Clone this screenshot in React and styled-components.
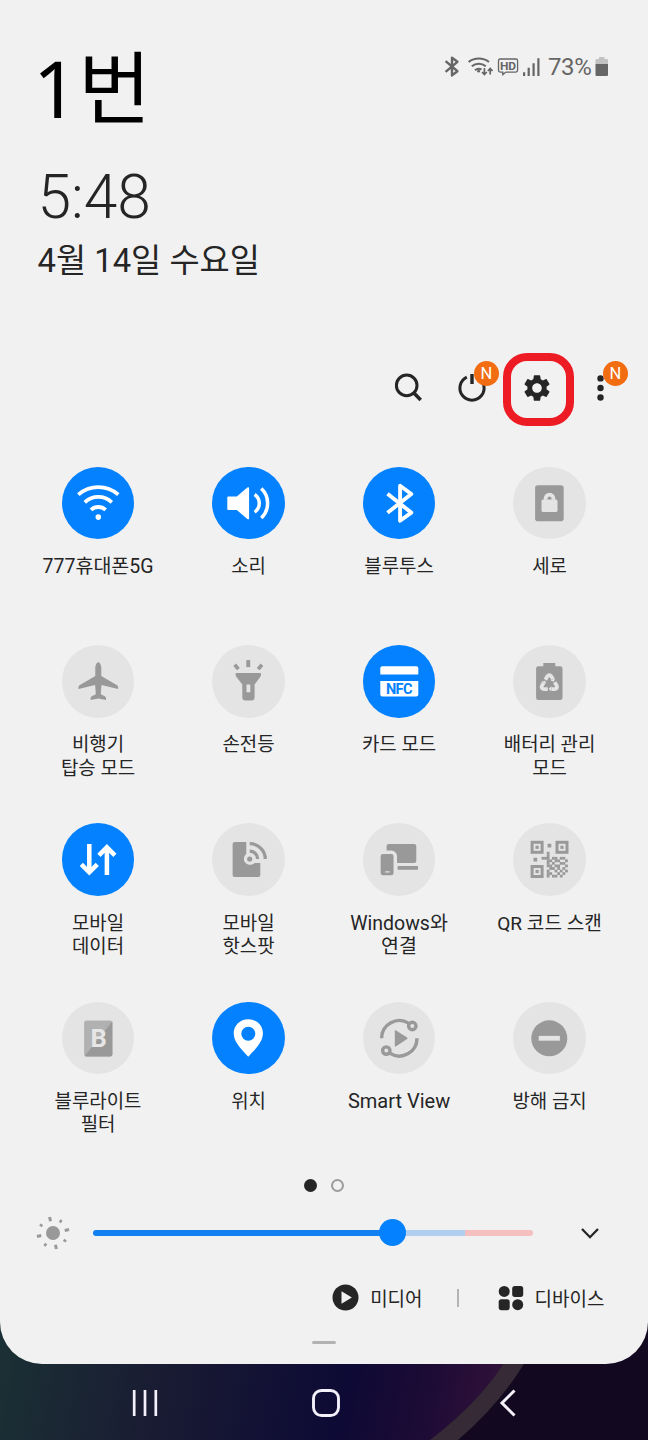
import React from "react";
import styled, { createGlobalStyle, css } from "styled-components";
import { MdSettings } from "react-icons/md";

const GlobalStyle = createGlobalStyle`
  * {
    box-sizing: border-box;
  }
  body {
    margin: 0;
    background: #120a20;
    font-family: Roboto, "Noto Sans CJK KR", sans-serif;
    color: #252525;
  }
`;

const Screen = styled.div`
  position: relative;
  display: flex;
  flex-direction: column;
  width: 648px;
  height: 1440px;
  overflow: hidden;
`;

const WallpaperSvg = styled.svg`
  position: absolute;
  left: 0;
  bottom: 0;
`;

const Panel = styled.main`
  position: relative;
  display: flex;
  flex-direction: column;
  height: 1364px;
  background: #f1f1f1;
  border-radius: 0 0 42px 42px;
`;

const Header = styled.header`
  display: flex;
  justify-content: space-between;
  height: 348px;
  padding: 28px 40px 0 33px;
`;

const Carrier = styled.h1`
  margin: 0;
  font-family: "Noto Sans", "Noto Sans CJK KR", sans-serif;
  font-size: 79px;
  font-weight: 400;
  line-height: 120px;
  color: #000;
`;

const Clock = styled.div`
  margin: 13px 0 0 4.5px;
  font-size: 60.5px;
  font-weight: 300;
  line-height: 74px;
`;

const DateText = styled.div`
  margin: 5px 0 0 4.5px;
  font-size: 32.8px;
  line-height: 42px;
`;

const StatusBar = styled.div`
  display: flex;
  align-items: center;
  height: 30px;
  margin-top: 24px;
  color: #666;
`;

const BatteryPercent = styled.span`
  width: 47px;
  font-size: 24px;
  letter-spacing: -0.4px;
`;

const Toolbar = styled.div`
  display: flex;
  justify-content: flex-end;
  height: 80px;
  padding-right: 14.5px;
`;

const ToolButton = styled.button`
  position: relative;
  display: flex;
  align-items: center;
  justify-content: center;
  width: 64.6px;
  height: 80px;
  padding: 0;
  border: 0;
  background: none;
  color: #252525;
`;

const Highlight = styled.span`
  position: absolute;
  top: 5px;
  left: -1.3px;
  width: 71px;
  height: 73px;
  border: 8px solid #ed1c24;
  border-radius: 24px;
`;

const Badge = styled.span`
  position: absolute;
  top: 13px;
  right: 5.5px;
  display: flex;
  align-items: center;
  justify-content: center;
  width: 25px;
  height: 25px;
  border-radius: 50%;
  background: #f26c12;
  color: #fff;
  font-family: Roboto, sans-serif;
  font-size: 16.5px;
  line-height: 25px;
`;

const TileGrid = styled.section`
  display: grid;
  grid-template-columns: repeat(4, 150.5px);
  grid-auto-rows: 178.3px;
  margin: 38.8px 0 0 22.8px;
`;

const Tile = styled.div`
  display: flex;
  flex-direction: column;
  align-items: center;
`;

const TileIcon = styled.div`
  width: 72.6px;
  height: 72.6px;
  border-radius: 50%;
  background: ${({ $on }) => ($on ? "#0381fe" : "#e4e4e4")};
  color: ${({ $on }) => ($on ? "#fff" : "#999")};

  svg {
    display: block;
  }
`;

const TileLabel = styled.div`
  margin-top: 15.6px;
  font-size: ${({ $size }) => $size || 18.9}px;
  line-height: 23.4px;
  text-align: center;
  white-space: pre-line;
`;

const Pager = styled.div`
  display: flex;
  align-items: center;
  justify-content: center;
  gap: 13.5px;
  height: 14px;
  margin-top: -1px;
`;

const PageDot = styled.span`
  width: 13px;
  height: 13px;
  border-radius: 50%;
  ${({ $active }) =>
    $active
      ? css`
          background: #252525;
        `
      : css`
          border: 2.4px solid #9b9b9b;
        `}
`;

const BrightnessRow = styled.div`
  display: flex;
  align-items: center;
  height: 40px;
  margin-top: 20.5px;
  padding: 0 48px 0 35px;
`;

const Track = styled.div`
  display: flex;
  align-items: center;
  width: 440px;
  height: 6px;
  margin: -1px 0 0 22px;
  border-radius: 3px;
  background: linear-gradient(
    to right,
    #1280f0 0 300px,
    #b0cff0 300px 372px,
    #f6bfbf 372px
  );
`;

const Thumb = styled.span`
  width: 27px;
  height: 27px;
  margin-left: 286px;
  border-radius: 50%;
  background: #0381fe;
`;

const Chevron = styled.svg`
  margin-left: auto;
`;

const Footer = styled.div`
  display: flex;
  align-items: center;
  justify-content: flex-end;
  height: 40px;
  margin-top: 24.5px;
  padding-right: 43.5px;
  font-size: 19px;
`;

const FooterItem = styled.div`
  display: flex;
  align-items: center;
  gap: 11px;
`;

const Divider = styled.span`
  width: 2px;
  height: 18px;
  margin: 0 39px 0 34px;
  background: #b4b4b4;
`;

const Handle = styled.span`
  align-self: center;
  width: 24px;
  height: 3px;
  margin-top: 23px;
  border-radius: 2px;
  background: #b2b2b2;
`;

const NavBar = styled.nav`
  position: relative;
  display: grid;
  grid-template-columns: repeat(3, 181.5px);
  justify-content: center;
  align-items: center;
  justify-items: center;
  height: 76px;
  padding: 2px 0 0 4px;
`;

// Every icon is drawn around its own centre point.
function Icon({ size = 72.6, children, ...rest }) {
  return (
    <svg
      width={size}
      height={size}
      viewBox={`${-size / 2} ${-size / 2} ${size} ${size}`}
      fill="currentColor"
      {...rest}
    >
      {children}
    </svg>
  );
}

const line = { fill: "none", stroke: "currentColor" };

function WifiIcon() {
  return (
    <Icon>
      <g {...line} strokeWidth="3.8">
        <path d="M-20 -8.7A30.4 30.4 0 0 1 20 -8.7" />
        <path d="M-13.5 -1A19.6 19.6 0 0 1 13.5 -1" />
        <path d="M-7.3 6.6A10.6 10.6 0 0 1 7.3 6.6" />
      </g>
      <circle cy="13.8" r="2.8" />
    </Icon>
  );
}

function SoundIcon() {
  return (
    <Icon>
      <path d="M-20 -6.7H-11.5L-1 -15.8Q.8 -16.8 .8 -15V15Q.8 16.8 -1 15.8L-11.5 6.7H-20Q-21 6.7 -21 5.7V-5.7Q-21 -6.7 -20 -6.7Z" />
      <g {...line} strokeWidth="3.5">
        <path d="M6.3 -8.8A10.6 10.6 0 0 1 6.3 8.8" />
        <path d="M13 -14.7A20.3 20.3 0 0 1 13 14.7" />
      </g>
    </Icon>
  );
}

function BluetoothIcon() {
  return (
    <Icon>
      <path
        d="M-11.8 -9.5L12 9.3L.8 17.5V-17.5L12 -9.3L-11.8 9.5"
        {...line}
        strokeWidth="3.9"
        strokeLinejoin="round"
      />
    </Icon>
  );
}

function PortraitIcon() {
  return (
    <Icon>
      <rect x="-14.2" y="-18" width="28.6" height="36" rx="2.8" />
      <g fill="#e4e4e4">
        <rect x="-7.8" y="-3.8" width="16" height="12.6" rx="1.6" />
        <path d="M-5.6 -3.5V-4.8A5.8 5.8 0 0 1 6 -4.8V-3.5Z" />
      </g>
      <path d="M-1.7 -3.8V-5A1.9 1.9 0 0 1 2.1 -5V-3.8Z" />
    </Icon>
  );
}

function PlaneIcon() {
  return (
    <Icon>
      <path d="M0 -19C1.8 -19 3 -15.5 3 -13V-5.2L18.8 4Q19.8 4.7 19.8 6V7.8L3.2 3.6L2.5 12.2Q2.6 13.4 4 13.8Q7.7 15 7.7 17V18.8L0 17.2L-7.7 18.8V17Q-7.7 15 -4 13.8Q-2.6 13.4 -2.5 12.2L-3.2 3.6L-19.8 7.8V6Q-19.8 4.7 -18.8 4L-3 -5.2V-13C-3 -15.5 -1.8 -19 0 -19Z" />
    </Icon>
  );
}

function FlashlightIcon() {
  return (
    <Icon>
      <path d="M-2 -21.2H1.9V-14.2H-2Z" />
      <path d="M-13.6 -16.6L-9.9 -12.2M13.6 -16.6L9.9 -12.2" {...line} strokeWidth="3.7" />
      <path
        fillRule="evenodd"
        d="M-12.6 -8.2H12.6V-5.4L6.3 3.3V16.3Q6.3 19.3 3.3 19.3H-3Q-6 19.3 -6 16.3V3.3L-12.6 -5.4ZM-1.8 3.3V10.9H2V3.3Z"
      />
    </Icon>
  );
}

const NfcText = styled.text`
  fill: #0381fe;
  font: 700 14.6px Roboto, sans-serif;
`;

function NfcIcon() {
  return (
    <Icon>
      <path d="M-19 -6.7V-13Q-19 -15 -17 -15H17Q19 -15 19 -13V-6.7Z" />
      <path d="M-19 -.3H19V13Q19 15.2 17 15.2H-17Q-19 15.2 -19 13Z" />
      <NfcText x="-13.4" y="12.8" textLength="26.6">
        NFC
      </NfcText>
    </Icon>
  );
}

function BatteryIcon() {
  return (
    <Icon>
      <path d="M-6 -18.3H6V-15H11Q13.2 -15 13.2 -12.8V16.4Q13.2 18.6 11 18.6H-11Q-13.2 18.6 -13.2 16.4V-12.8Q-13.2 -15 -11 -15H-6Z" />
      <g color="#e4e4e4">
        {[0, 120, 240].map((angle) => (
          <g key={angle} transform={`translate(0 2.4) rotate(${angle})`}>
            <path d="M-3.9 -4L-2 -7.3Q0 -10 2 -7.3L3.6 -4.6" {...line} strokeWidth="3.8" />
            <path d="M1.2 -3.2L5.9 -5.6L4.6 -1.9Z" fill="currentColor" />
          </g>
        ))}
      </g>
    </Icon>
  );
}

function DataIcon() {
  return (
    <Icon>
      <g {...line} strokeWidth="4.5">
        <path d="M-9 -15.3V13M-17 5L-9 13L-1 5" />
        <path d="M8.6 15.8V-12M.6 -4L8.6 -12L16.6 -4" />
      </g>
    </Icon>
  );
}

function HotspotIcon() {
  return (
    <Icon>
      <path d="M-13.7 -17.3H-2V-5.5A6 6 0 1 0 6.5 3.6H12V15.6Q12 17.6 10 17.6H-13.7Q-15.7 17.6 -15.7 15.6V-15.3Q-15.7 -17.3 -13.7 -17.3Z" />
      <circle cx="1.4" cy="-.3" r="5.8" fill="#e4e4e4" />
      <circle cx="1.4" cy="-.3" r="2.6" />
      <g {...line} strokeWidth="3.3">
        <path d="M1.4 -8.2A7.9 7.9 0 0 1 9.3 -.3" />
        <path d="M1.4 -15.7A15.6 15.6 0 0 1 17 -.3" />
      </g>
    </Icon>
  );
}

function WindowsLinkIcon() {
  return (
    <Icon>
      <rect x="-12.7" y="-15.3" width="29.7" height="19" rx="2.2" />
      <path d="M-1.7 6.7H18.7V10.5H-1.7Z" />
      <rect
        x="-20.4"
        y="-7"
        width="16.4"
        height="24.8"
        rx="4"
        fill="currentColor"
        stroke="#e4e4e4"
        strokeWidth="3.5"
      />
      <path d="M-14.2 12H-9.6V13.2H-14.2Z" fill="#e4e4e4" />
    </Icon>
  );
}

// Lower right area of the code, one string per row of modules.
const qrModules = [
  "..#.......",
  "..#.......",
  "###.##.##.",
  "..##.##..#",
  "..#.#..##.",
  "..##.##..#",
  "...##.#.#.",
  "..#..#.#.#",
  "..##..#.#.",
  "..#.##.#..",
];

function QrIcon() {
  return (
    <Icon>
      {[
        [-18.7, -18.5],
        [6.2, -18.5],
        [-18.7, 5.7],
      ].map(([x, y]) => (
        <g key={`${x}${y}`}>
          <rect x={x + 1.5} y={y + 1.5} width="10" height="10" {...line} strokeWidth="3" />
          <rect x={x + 4.9} y={y + 4.9} width="3.2" height="3.2" />
        </g>
      ))}
      <path d="M-1.7 -15.5H2V-11.8H-1.7ZM-15.8 -1.5H-12.1V2.2H-15.8Z" />
      {qrModules.map((row, y) =>
        row
          .split("")
          .map((cell, x) =>
            cell === "#" ? (
              <rect key={`${x}-${y}`} x={-7.8 + x * 2.62} y={-7.5 + y * 2.55} width="2.8" height="2.75" />
            ) : null
          )
      )}
    </Icon>
  );
}

const FilterText = styled.text`
  fill: #e6e6e6;
  font: 700 25.5px Roboto, sans-serif;
`;

function BlueLightIcon() {
  return (
    <Icon>
      <rect x="-14.2" y="-17.8" width="28.3" height="36" rx="2.5" fill="#b1b1b1" />
      <path d="M13.9 -16.7L-13.5 17.7Q-12.8 18.2 -11.8 18.2H11.6Q14.1 18.2 14.1 15.7V-15.5Q14.1 -16.2 13.9 -16.7Z" />
      <FilterText x="-7.8" y="8.6">
        B
      </FilterText>
    </Icon>
  );
}

function LocationIcon() {
  return (
    <Icon>
      <path
        fillRule="evenodd"
        d="M0 -19C8.3 -19 14.6 -12.8 14.6 -4.9C14.6 4.6 4.5 13 0 18.4C-4.5 13 -14.6 4.6 -14.6 -4.9C-14.6 -12.8 -8.3 -19 0 -19ZM0 -11.6A7 7 0 1 0 0 2.4A7 7 0 1 0 0 -11.6Z"
      />
    </Icon>
  );
}

function SmartViewIcon() {
  return (
    <Icon>
      <path d="M-4.5 -7Q-4.5 -8.4 -3.2 -7.7L7.8 -.7Q8.8 0 7.8 .7L-3.2 7.9Q-4.5 8.6 -4.5 7.2Z" />
      <g {...line} strokeWidth="3.4">
        <path d="M-17.7 0A17.7 17.7 0 0 1 9.6 -14.9" />
        <path d="M17.7 0A17.7 17.7 0 0 1 -9.6 14.9" />
        <circle cx="13" cy="-12.3" r="3.7" />
        <circle cx="-13" cy="12.3" r="3.7" />
      </g>
    </Icon>
  );
}

function DndIcon() {
  return (
    <Icon>
      <circle r="18" />
      <path d="M-10.6 -2.4H10.6V2.4H-10.6Z" fill="#e4e4e4" />
    </Icon>
  );
}

const tiles = [
  { label: "777휴대폰5G", icon: WifiIcon, on: true, size: 19.5 },
  { label: "소리", icon: SoundIcon, on: true },
  { label: "블루투스", icon: BluetoothIcon, on: true },
  { label: "세로", icon: PortraitIcon },
  { label: "비행기\n탑승 모드", icon: PlaneIcon },
  { label: "손전등", icon: FlashlightIcon },
  { label: "카드 모드", icon: NfcIcon, on: true },
  { label: "배터리 관리\n모드", icon: BatteryIcon },
  { label: "모바일\n데이터", icon: DataIcon, on: true },
  { label: "모바일\n핫스팟", icon: HotspotIcon },
  { label: "Windows와\n연결", icon: WindowsLinkIcon, size: 19.5 },
  { label: "QR 코드 스캔", icon: QrIcon, size: 19.1 },
  { label: "블루라이트\n필터", icon: BlueLightIcon },
  { label: "위치", icon: LocationIcon, on: true },
  { label: "Smart View", icon: SmartViewIcon, size: 20 },
  { label: "방해 금지", icon: DndIcon },
];

const HdText = styled.text`
  font: 700 11.5px Roboto, sans-serif;
`;

function StatusIcons() {
  return (
    <svg width="105" height="30" viewBox="443 52 105 30" fill="currentColor">
      <path
        d="M445.6 61.2L457.4 71.2L452 75.4V57.6L457.4 61.8L445.6 71.8"
        {...line}
        strokeWidth="2.4"
        strokeLinejoin="round"
      />
      <g {...line} strokeWidth="2.1">
        <path d="M468.6 62A16.5 16.5 0 0 1 489 62" />
        <path d="M471.8 66.3A11 11 0 0 1 485.8 66.3" />
        <path d="M475 70.3A6 6 0 0 1 481.5 69.5" />
      </g>
      <circle cx="478.6" cy="71.2" r="1.4" />
      <path
        d="M484.4 68V74M482 72L484.4 74.5L486.8 72M490.2 74.5V69M487.8 71L490.2 68.5L492.6 71"
        {...line}
        strokeWidth="1.7"
      />
      <path
        d="M500.3 59H515.8Q517.6 59 517.6 60.8V70.3Q517.6 72.1 515.8 72.1H506L502.8 74.6V72.1H500.3Q498.5 72.1 498.5 70.3V60.8Q498.5 59 500.3 59Z"
        {...line}
        strokeWidth="1.3"
      />
      <HdText x="499.9" y="69.8" textLength="16.2" lengthAdjust="spacingAndGlyphs">
        HD
      </HdText>
      <path d="M523 72.2H525.2V76H523ZM527.6 67.8H529.8V76H527.6ZM532.5 63.2H534.7V76H532.5ZM537.3 58.2H539.5V76H537.3Z" />
    </svg>
  );
}

function BatteryLevel() {
  return (
    <svg width="13" height="20" viewBox="0 0 13 20">
      <path d="M4 0H9.5V2H12Q13 2 13 3V8H.5V3Q.5 2 1.5 2H4Z" fill="#c2c2c2" />
      <path d="M.5 7H13V18Q13 19 12 19H1.5Q.5 19 .5 18Z" fill="#666" />
    </svg>
  );
}

function SearchIcon() {
  return (
    <Icon size={40}>
      <circle cx="-.3" cy="-2.6" r="10.3" {...line} strokeWidth="3" />
      <path d="M6.7 4.7L13.7 12" {...line} strokeWidth="3.5" />
    </Icon>
  );
}

function PowerIcon() {
  return (
    <Icon size={40}>
      <path d="M-5.2 -10.9A12.1 12.1 0 1 0 5.2 -10.9" {...line} strokeWidth="3" />
      <path d="M0 -14V-4" {...line} strokeWidth="3.4" />
    </Icon>
  );
}

function MoreIcon() {
  return (
    <Icon size={40}>
      <circle cx="-.5" cy="-9.6" r="3.2" />
      <circle cx="-.5" r="3.2" />
      <circle cx="-.5" cy="9.5" r="3.2" />
    </Icon>
  );
}

function SunIcon() {
  return (
    <Icon size={36} color="#999">
      <circle r="7" />
      {[0, 90, 180, 270].map((angle) => (
        <g key={angle} transform={`rotate(${angle - 12})`} {...line} strokeWidth="3">
          <path d="M0 -12V-16.4" />
          <path d="M0 -12.6V-15.6" strokeWidth="2.6" transform="rotate(45)" />
        </g>
      ))}
    </Icon>
  );
}

function Wallpaper() {
  return (
    <WallpaperSvg width="648" height="140" viewBox="0 1300 648 140">
      <defs>
        <linearGradient id="night" x1="0" y1="1340" x2="500" y2="1440" gradientUnits="userSpaceOnUse">
          <stop offset="0" stopColor="#1b3034" />
          <stop offset="0.35" stopColor="#191a33" />
          <stop offset="0.68" stopColor="#0d0a35" />
          <stop offset="0.84" stopColor="#1c0b35" />
          <stop offset="1" stopColor="#34123a" />
        </linearGradient>
      </defs>
      <path d="M0 1300H648V1440H0Z" fill="url(#night)" />
      <path d="M530 1300Q515 1375 430 1440H648V1300Z" fill="#352a35" />
      <path d="M550 1300Q533 1375 458 1440H648V1300Z" fill="#120920" />
    </WallpaperSvg>
  );
}

export default function App() {
  return (
    <>
      <GlobalStyle />
      <Screen>
        <Wallpaper />
        <Panel>
          <Header>
            <div>
              <Carrier>1번</Carrier>
              <Clock>5:48</Clock>
              <DateText>4월 14일 수요일</DateText>
            </div>
            <StatusBar>
              <StatusIcons />
              <BatteryPercent>73%</BatteryPercent>
              <BatteryLevel />
            </StatusBar>
          </Header>

          <Toolbar>
            <ToolButton aria-label="검색">
              <SearchIcon />
            </ToolButton>
            <ToolButton aria-label="전원">
              <PowerIcon />
              <Badge>N</Badge>
            </ToolButton>
            <ToolButton aria-label="설정">
              <MdSettings size={32} />
              <Highlight />
            </ToolButton>
            <ToolButton aria-label="더보기">
              <MoreIcon />
              <Badge>N</Badge>
            </ToolButton>
          </Toolbar>

          <TileGrid>
            {tiles.map(({ label, icon: TileSvg, on, size }) => (
              <Tile key={label}>
                <TileIcon $on={on}>
                  <TileSvg />
                </TileIcon>
                <TileLabel $size={size}>{label}</TileLabel>
              </Tile>
            ))}
          </TileGrid>

          <Pager>
            <PageDot $active />
            <PageDot />
          </Pager>

          <BrightnessRow>
            <SunIcon />
            <Track>
              <Thumb />
            </Track>
            <Chevron width="20" height="14" viewBox="0 0 20 14">
              <path d="M2 3L10 11.2L18 3" fill="none" stroke="#252525" strokeWidth="2.3" />
            </Chevron>
          </BrightnessRow>

          <Footer>
            <FooterItem>
              <Icon size={27}>
                <circle r="13" />
                <path d="M-4 -6.2V6.2L6.4 0Z" fill="#f1f1f1" />
              </Icon>
              미디어
            </FooterItem>
            <Divider />
            <FooterItem>
              <Icon size={26}>
                <circle cx="-6.8" cy="-6.6" r="5.5" />
                <rect x="1.2" y="-12.1" width="11" height="11" rx="2.6" />
                <rect x="-12.3" y="1.2" width="11" height="11" rx="2.6" />
                <circle cx="6.7" cy="6.7" r="5.5" />
              </Icon>
              디바이스
            </FooterItem>
          </Footer>
          <Handle />
        </Panel>

        <NavBar>
          <Icon size={30} color="#f3f0fa">
            <path d="M-10.8 -13V13M0 -13V13M10.8 -13V13" {...line} strokeWidth="2.7" />
          </Icon>
          <Icon size={30} color="#f3f0fa">
            <rect x="-12.5" y="-12.5" width="25" height="25" rx="8" {...line} strokeWidth="2.9" />
          </Icon>
          <Icon size={30} color="#f3f0fa">
            <path d="M6.5 -12.5L-6 0L6.5 12.5" {...line} strokeWidth="3" />
          </Icon>
        </NavBar>
      </Screen>
    </>
  );
}
